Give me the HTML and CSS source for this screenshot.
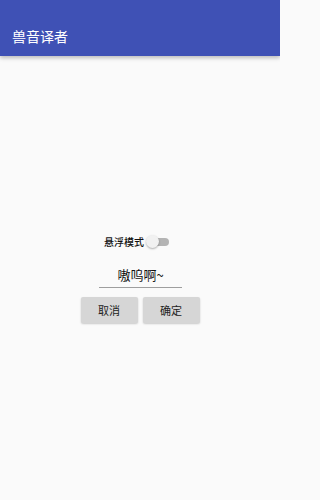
FILE: index.html
```html
<!DOCTYPE html>
<html lang="zh">
<head>
<meta charset="utf-8">
<link rel="stylesheet" href="styles.css">
</head>
<body>
<header class="appbar"><span class="title">兽音译者</span></header>
<main class="content">
  <div class="switch-row">
    <span class="switch-label">悬浮模式</span>
    <span class="switch"><span class="track"></span><span class="thumb"></span></span>
  </div>
  <div class="field"><span class="field-text">嗷呜啊~</span></div>
  <div class="buttons">
    <button class="btn">取消</button>
    <button class="btn">确定</button>
  </div>
</main>
</body>
</html>
```
FILE: styles.css
```css
html, body {
  margin: 0;
  padding: 0;
  background: #fafafa;
  font-family: "Noto Sans CJK SC", "Noto Sans", sans-serif;
  width: 280px;
  height: 500px;
  overflow: hidden;
}
.appbar {
  height: 56px;
  box-sizing: border-box;
  background: #3f51b5;
  padding: 27px 0 0 12px;
  box-shadow: 0 2px 4px rgba(0,0,0,0.25);
}
.title {
  color: #fff;
  font-size: 14px;
  line-height: 18px;
  display: block;
}
.content {
  display: flex;
  flex-direction: column;
  align-items: center;
  padding-top: 178px;
}
.switch-row {
  display: flex;
  align-items: center;
  height: 16px;
  gap: 2px;
  margin-right: 6px;
}
.switch-label {
  font-size: 10px;
  color: #111;
  line-height: 16px;
  font-weight: 500;
}
.switch {
  position: relative;
  width: 24px;
  height: 16px;
  display: block;
}
.track {
  position: absolute;
  left: 4px;
  top: 4px;
  width: 19px;
  height: 8px;
  border-radius: 4px;
  background: #b4b4b4;
}
.thumb {
  position: absolute;
  left: 0;
  top: 1px;
  width: 13px;
  height: 13px;
  border-radius: 50%;
  background: #f1f1f1;
  box-shadow: 0 1px 2px rgba(0,0,0,0.3);
}
.field {
  margin-top: 11px;
  width: 83px;
  border-bottom: 1px solid #9e9e9e;
  text-align: center;
  padding-bottom: 2px;
  margin-left: 1px;
}
.field-text {
  font-size: 13px;
  line-height: 18px;
  color: #111;
}
.buttons {
  display: flex;
  gap: 5px;
  margin-top: 9px;
}
.btn {
  width: 57px;
  height: 26px;
  border: none;
  border-radius: 2px;
  background: #d6d6d6;
  box-shadow: 0 1px 2px rgba(0,0,0,0.2);
  font-family: "Noto Sans CJK SC", "Noto Sans", sans-serif;
  font-size: 11px;
  color: #222;
  padding: 0;
}
```
